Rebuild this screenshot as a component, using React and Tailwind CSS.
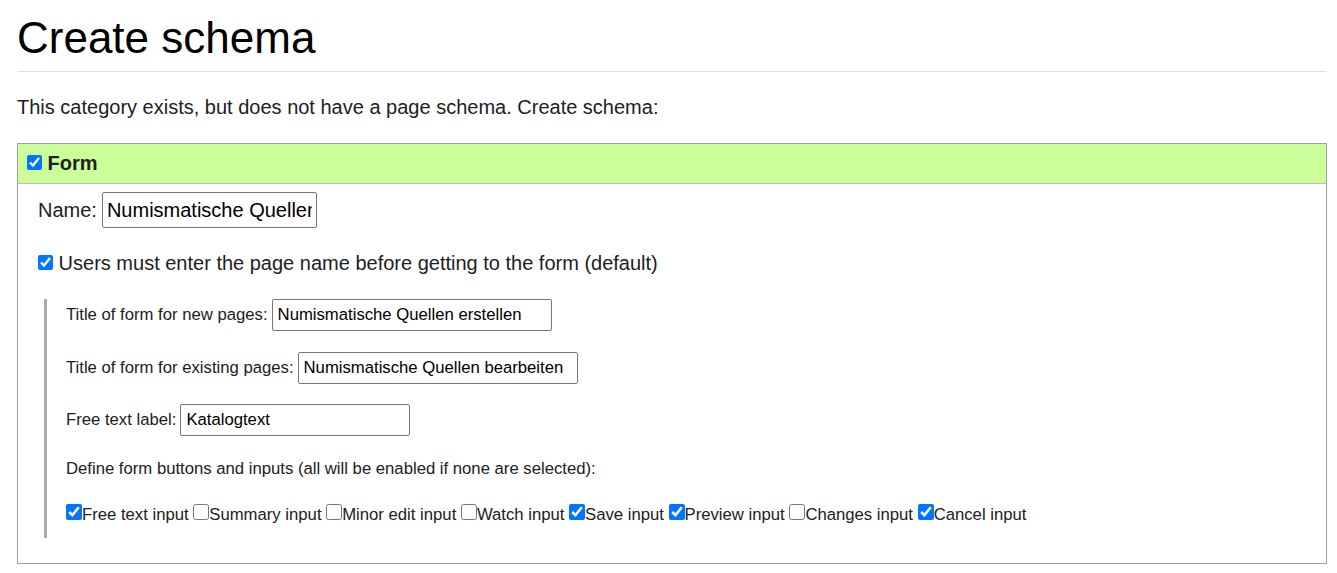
import React from 'react';

const inputs = [
  { label: 'Free text input', checked: true },
  { label: 'Summary input', checked: false },
  { label: 'Minor edit input', checked: false },
  { label: 'Watch input', checked: false },
  { label: 'Save input', checked: true },
  { label: 'Preview input', checked: true },
  { label: 'Changes input', checked: false },
  { label: 'Cancel input', checked: true },
];

const FieldRow = ({ label, value, width, className = '' }) => (
  <div className={`flex items-center h-[32px] ${className}`}>
    <span>{label}</span>
    <input
      type="text"
      defaultValue={value}
      className={`ml-[4px] h-[32px] ${width} border border-[#767676] rounded-[2px] px-[5px] text-black bg-white outline-none`}
    />
  </div>
);

const App = () => {
  return (
    <div className="min-h-screen bg-white text-[#202122] font-['Liberation_Sans',Arial,sans-serif] pl-[17px] pr-[10px]">
      <h1 className="mt-[10px] text-[44px] leading-[55px] text-black pb-[6px] border-b border-[#dddddd]">
        Create schema
      </h1>

      <p className="mt-[21px] text-[20px] leading-[28px]">
        This category exists, but does not have a page schema. Create schema:
      </p>

      <div className="mt-[22px] border border-[#a0a0a0]">
        <div className="h-[40px] leading-[39px] bg-[#ccff99] border-b border-[#bbbbbb] pl-[9px] text-[20px] font-bold">
          <input type="checkbox" defaultChecked className="m-0 w-[15px] h-[15px] align-baseline" />{' '}
          Form
        </div>

        <div className="mt-[8px] pl-[20px] flex items-center text-[20px]">
          <span>Name:</span>
          <input
            type="text"
            defaultValue="Numismatische Quellen"
            className="ml-[5px] w-[215px] h-[36px] border border-[#767676] rounded-[2px] px-[4px] text-black bg-white outline-none"
          />
        </div>

        <div className="mt-[21px] pl-[20px] text-[20px] leading-[28px]">
          <label>
            <input type="checkbox" defaultChecked className="m-0 w-[15px] h-[15px] align-baseline" />{' '}
            Users must enter the page name before getting to the form (default)
          </label>
        </div>

        <div className="mt-[22px] ml-[26px] mb-[25px] border-l-[3px] border-[#aaaaaa] pl-[19px] pb-[13px] text-[16.7px]">
          <FieldRow label="Title of form for new pages:" value="Numismatische Quellen erstellen" width="w-[280px]" />
          <FieldRow label="Title of form for existing pages:" value="Numismatische Quellen bearbeiten" width="w-[280px]" className="mt-[21px]" />
          <FieldRow label="Free text label:" value="Katalogtext" width="w-[230px]" className="mt-[20px]" />

          <p className="mt-[23px] leading-[20px]">
            Define form buttons and inputs (all will be enabled if none are selected):
          </p>

          <div className="mt-[25px] leading-[20px]">
            {inputs.map((item) => (
              <React.Fragment key={item.label}>
                <label>
                  <input
                    type="checkbox"
                    defaultChecked={item.checked}
                    className="m-0 w-[16px] h-[16px] align-baseline"
                  />
                  {item.label}
                </label>{' '}
              </React.Fragment>
            ))}
          </div>
        </div>
      </div>
    </div>
  );
};

export default App;
